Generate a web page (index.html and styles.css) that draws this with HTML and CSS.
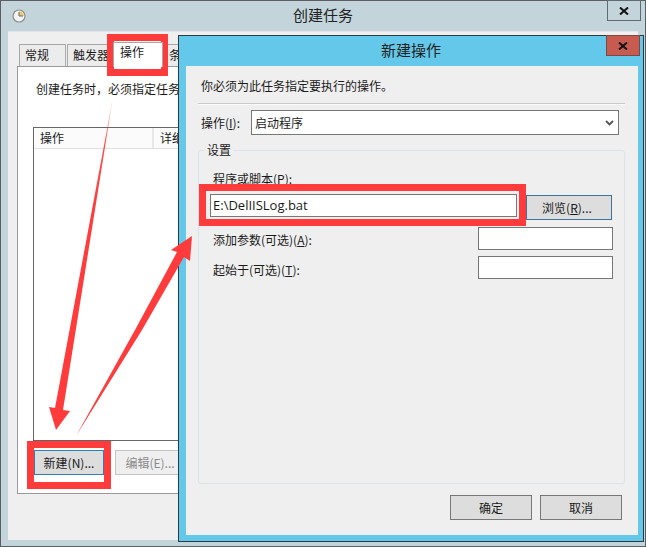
FILE: index.html
```html
<!DOCTYPE html>
<html lang="zh">
<head>
<meta charset="utf-8">
<title>创建任务</title>
<link rel="stylesheet" href="styles.css">
</head>
<body>
<div class="desktop">
  <section class="win back">
    <header class="titlebar">
      <svg class="clock" viewBox="0 0 14 14" width="14" height="14">
        <circle cx="7" cy="7" r="6" fill="#f4f4f4" stroke="#8d8d8d" stroke-width="1.2"/>
        <path d="M7 2.2A4.8 4.8 0 0 1 11.8 7H7Z" fill="#f2c869"/>
        <path d="M7 3v4h4" fill="none" stroke="#5a6b78" stroke-width="1"/>
      </svg>
      <h1 class="title">创建任务</h1>
      <div class="close">
        <svg viewBox="0 0 10 8" width="10" height="8"><path d="M1 0.5 9 7.5M9 0.5 1 7.5" stroke="#111" stroke-width="2"/></svg>
      </div>
    </header>
    <div class="client back-client">
      <nav class="tabs">
        <div class="tab tab-general">常规</div>
        <div class="tab tab-triggers">触发器</div>
        <div class="tab active">操作</div>
        <div class="tab">条件</div>
      </nav>
      <div class="panel">
        <p class="panel-text">创建任务时，必须指定任务</p>
        <div class="table">
          <div class="thead">
            <div class="th th-action">操作</div>
            <div class="th">详细信息</div>
          </div>
        </div>
        <div class="panel-actions">
          <div class="btn btn-focus">新建(N)...</div>
          <div class="btn btn-disabled">编辑(E)...</div>
        </div>
      </div>
    </div>
  </section>

  <section class="win front">
    <header class="titlebar">
      <span></span>
      <h1 class="title">新建操作</h1>
      <div class="close close-red">
        <svg viewBox="0 0 10 8" width="10" height="8"><path d="M1 0.5 9 7.5M9 0.5 1 7.5" stroke="#111" stroke-width="2"/></svg>
      </div>
    </header>
    <div class="client front-client">
      <p class="intro">你必须为此任务指定要执行的操作。</p>
      <div class="separator"></div>
      <div class="action-row">
        <span class="action-label">操作(<u>I</u>):</span>
        <div class="select">
          <span>启动程序</span>
          <svg viewBox="0 0 9 6" width="9" height="6"><path d="M1 1 4.500 4.500 8 1" fill="none" stroke="#555" stroke-width="1.800"/></svg>
        </div>
      </div>
      <fieldset class="settings">
        <legend>设置</legend>
        <div class="field-label">程序或脚本(P):</div>
        <div class="script-row">
          <div class="input script-input">E:\DelIISLog.bat</div>
          <div class="btn btn-browse">浏览(<u>R</u>)...</div>
        </div>
        <div class="param-row param-first">
          <span>添加参数(可选)(<u>A</u>):</span>
          <div class="input param-input"></div>
        </div>
        <div class="param-row param-second">
          <span>起始于(可选)(<u>T</u>):</span>
          <div class="input param-input"></div>
        </div>
      </fieldset>
      <div class="dialog-actions">
        <div class="btn btn-dialog">确定</div>
        <div class="btn btn-dialog">取消</div>
      </div>
    </div>
  </section>

  <svg class="arrows" viewBox="0 0 646 547" width="646" height="547">
    <defs>
      <linearGradient id="fade" x1="0" y1="97" x2="0" y2="210" gradientUnits="userSpaceOnUse">
        <stop offset="0" stop-color="#ff3b3b" stop-opacity="0.2"/>
        <stop offset="0.4" stop-color="#ff3b3b" stop-opacity="0.9"/>
        <stop offset="1" stop-color="#ff3b3b"/>
      </linearGradient>
    </defs>
    <polygon fill="url(#fade)" points="113,97 63,410 70,411 56,430 49,407 55,408"/>
    <polygon fill="#ff3b3b" points="76,436 135,330 177,252 171,250 192,236 190,261 184,257 142,330"/>
  </svg>
  <div class="mark mark-tab"></div>
  <div class="mark mark-new"></div>
  <div class="mark mark-script"></div>
</div>
</body>
</html>
```
FILE: styles.css
```css
* { box-sizing: border-box; }
html, body { margin: 0; padding: 0; background: #c3d5da; overflow: hidden; }
body { font: 12px/16px "Noto Sans CJK SC", "Open Sans", sans-serif; color: #1a1a1a; }
p, h1 { margin: 0; font-weight: normal; }
.desktop { position: relative; width: 646px; height: 547px; overflow: hidden; }

.win { position: absolute; display: flex; flex-direction: column; }
.back { left: 0; top: 0; width: 646px; height: 547px; background: #c3d5da; border: 1px solid #5a5f66; }
.front { left: 178px; top: 35px; width: 466px; height: 507px; background: #63c8ea; border: 1px solid #2c3a42; }

.titlebar { display: grid; grid-template-columns: 1fr auto 1fr; height: 30px; flex: none; }
.title { font-size: 15px; line-height: 28px; color: #222; }
.clock { margin: 8px 0 0 11px; }
.close { justify-self: end; width: 34px; height: 21px; margin-top: -1px; border: 1px solid #5f6b72; display: flex; align-items: center; justify-content: center; }
.back .close { margin-right: 4px; }
.front .close { margin-right: 3px; }
.close-red { background: #c75b50; border-color: #7a4a44; }

.client { background: #efefef; flex: 1; min-height: 0; }
.back-client { margin: 0 7px 6px 7px; padding: 12px 9px 0 9px; border-top: 1px solid #dfe5e8; }
.front-client { margin: 0 5px 6px 7px; display: flex; flex-direction: column; padding: 12px 0 0; }

.tabs { display: flex; height: 22px; padding-left: 2px; }
.tab { height: 22px; padding: 2px 5px 0; background: #ececec; border: 1px solid #a8a8a8; border-bottom: 0; margin-right: 1px; white-space: nowrap; }
.tab-general { width: 47px; }
.tab-triggers { width: 48px; }
.tab.active { background: #fff; margin: -2px 0 0 -3px; width: 50px; height: 25px; padding: 1px 0 0 6px; position: relative; z-index: 1; }

.panel { height: 428px; width: 612px; background: #fff; border: 1px solid #9a9a9a; padding: 14px 15px 0; }
.panel-text { padding-left: 3px; white-space: nowrap; }
.table { margin-top: 30px; height: 314px; border: 1px solid #666; }
.thead { display: flex; height: 21px; background: #fbfbfb; border-bottom: 1px solid #e2e2e2; }
.th { padding: 2px 0 0 6px; white-space: nowrap; }
.th-action { width: 120px; border-right: 2px solid #e8e8e8; }
.panel-actions { display: flex; gap: 11px; margin-top: 9px; padding-left: 1px; }

.btn { display: flex; align-items: center; justify-content: center; height: 25px; background: #ddd; border: 1px solid #777; white-space: nowrap; }
.btn-focus { width: 70px; border: 1px solid #2f7fb5; }
.btn-disabled { width: 70px; background: #efefef; border-color: #c4c4c4; color: #8a8a8a; }
.btn-browse { width: 86px; margin-left: 9px; margin-top: 1px; padding-right: 4px; border-color: #3a76a0; }
.btn-dialog { width: 82px; }

.intro { padding-left: 15px; }
.separator { margin: 9px 13px 0 12px; height: 2px; background: #c9c9c9; border-bottom: 1px solid #fafafa; }
.action-row { display: flex; align-items: center; margin-top: 5px; padding-left: 15px; }
.action-label { width: 50px; flex: none; }
.select { width: 368px; height: 25px; background: #fff; border: 1px solid #777; display: flex; align-items: center; justify-content: space-between; padding: 0 4px 0 3px; }

.settings { margin: 7px 13px 0 12px; padding: 0 11px; height: 342px; border: 1px solid #dce3ea; border-radius: 3px; flex: none; min-width: 0; }
.settings legend { padding: 0 3px; margin-left: -6px; }
.field-label { margin-top: 13px; padding-left: 3px; height: 15px; line-height: 15px; }
.script-row { display: flex; align-items: flex-start; margin-top: 8px; }
.input { background: #fff; border: 1px solid #777; height: 23px; }
.script-input { width: 307px; padding: 2px 2px; font-family: "Open Sans", "Noto Sans CJK SC", sans-serif; font-size: 13px; line-height: 17px; }
.param-row { display: flex; justify-content: space-between; align-items: center; padding-left: 3px; }
.param-first { margin-top: 7px; }
.param-first span { padding-top: 2px; }
.param-second { margin-top: 6px; }
.param-second span { padding-top: 4px; }
.param-input { width: 135px; }

.dialog-actions { display: flex; justify-content: flex-end; gap: 8px; margin-top: 11px; padding-right: 16px; }

.arrows { position: absolute; left: 0; top: 0; pointer-events: none; }
.mark { position: absolute; border: 7px solid #ff3b3b; }
.mark-tab { left: 107px; top: 34px; width: 61px; height: 42px; }
.mark-new { left: 27px; top: 441px; width: 84px; height: 48px; }
.mark-script { left: 199px; top: 184px; width: 327px; height: 42px; }
```
